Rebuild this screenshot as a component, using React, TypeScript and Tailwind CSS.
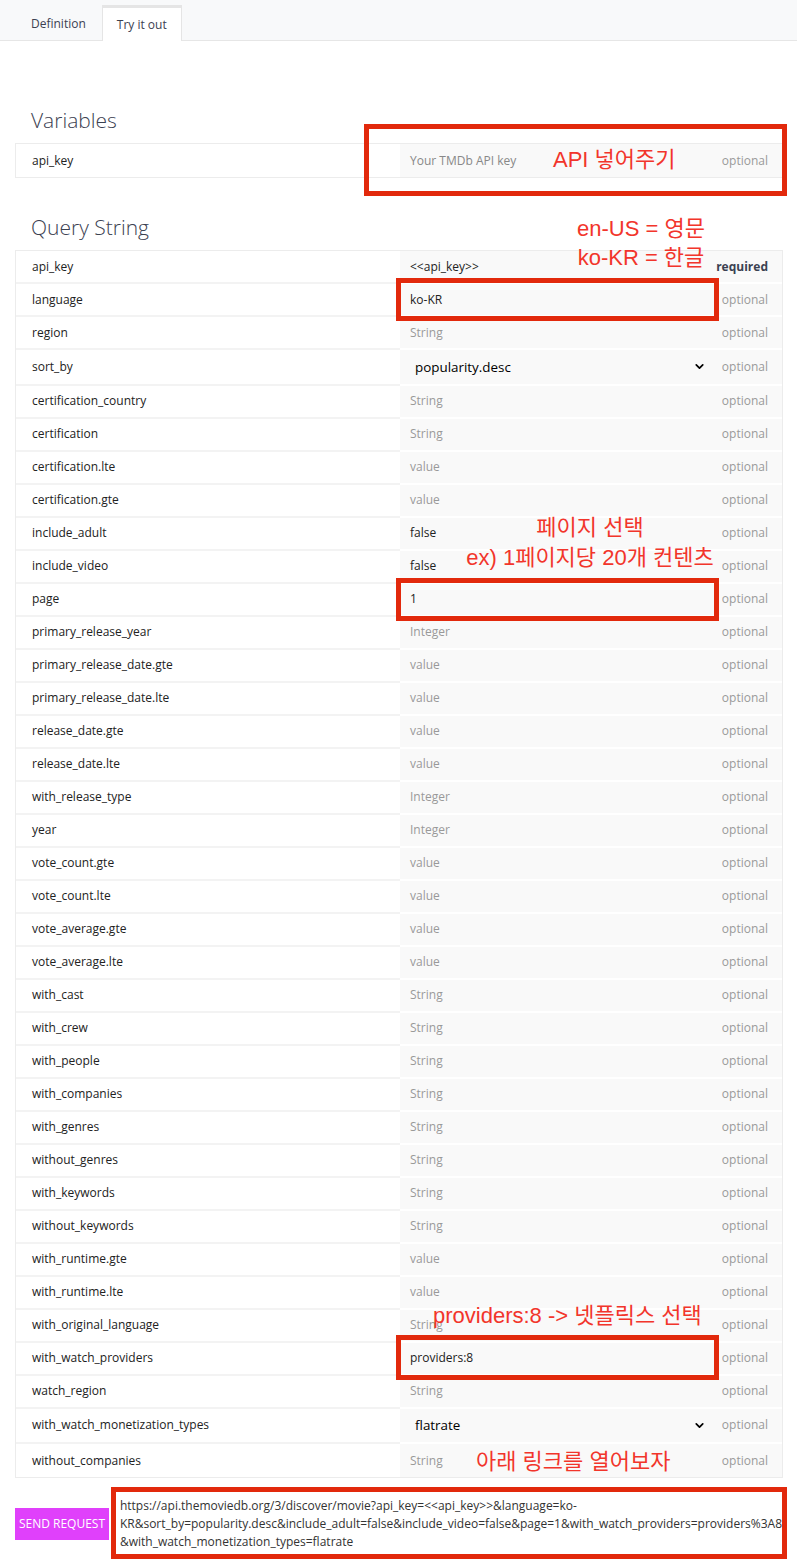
import { ChevronDown } from "lucide-react";

type Row = {
  name: string;
  value: string;
  kind?: "ph" | "val" | "select";
  required?: boolean;
};

const rows: Row[] = [
  { name: "api_key", value: "<<api_key>>", kind: "val", required: true },
  { name: "language", value: "ko-KR", kind: "val" },
  { name: "region", value: "String" },
  { name: "sort_by", value: "popularity.desc", kind: "select" },
  { name: "certification_country", value: "String" },
  { name: "certification", value: "String" },
  { name: "certification.lte", value: "value" },
  { name: "certification.gte", value: "value" },
  { name: "include_adult", value: "false", kind: "val" },
  { name: "include_video", value: "false", kind: "val" },
  { name: "page", value: "1", kind: "val" },
  { name: "primary_release_year", value: "Integer" },
  { name: "primary_release_date.gte", value: "value" },
  { name: "primary_release_date.lte", value: "value" },
  { name: "release_date.gte", value: "value" },
  { name: "release_date.lte", value: "value" },
  { name: "with_release_type", value: "Integer" },
  { name: "year", value: "Integer" },
  { name: "vote_count.gte", value: "value" },
  { name: "vote_count.lte", value: "value" },
  { name: "vote_average.gte", value: "value" },
  { name: "vote_average.lte", value: "value" },
  { name: "with_cast", value: "String" },
  { name: "with_crew", value: "String" },
  { name: "with_people", value: "String" },
  { name: "with_companies", value: "String" },
  { name: "with_genres", value: "String" },
  { name: "without_genres", value: "String" },
  { name: "with_keywords", value: "String" },
  { name: "without_keywords", value: "String" },
  { name: "with_runtime.gte", value: "value" },
  { name: "with_runtime.lte", value: "value" },
  { name: "with_original_language", value: "String" },
  { name: "with_watch_providers", value: "providers:8", kind: "val" },
  { name: "watch_region", value: "String" },
  { name: "with_watch_monetization_types", value: "flatrate", kind: "select" },
  { name: "without_companies", value: "String" },
];

export default function App() {
  return (
    <div className="relative w-[797px] min-h-[1565px] bg-white font-['Open_Sans',sans-serif] text-[12px] text-[#222]">
      {/* tabs */}
      <div className="h-[41px] bg-[#f8f9fa] border-b border-[#e6e6e6] flex items-end pl-[15px]">
        <div className="h-[36px] px-4 pt-[3px] flex items-center text-[#3b4151]">Definition</div>
        <div className="h-[36px] -mb-px px-[14px] flex items-center bg-white border-x border-t-[3px] border-[#e5e5e5] text-[#3b4151]">
          Try it out
        </div>
      </div>

      <div className="px-[15px]">
        <h2 className="mt-[64px] mb-[8px] pl-4 text-[21px] leading-[30px] font-light text-[#3b4151]">
          Variables
        </h2>
        <div className="w-[768px] border border-[#ececec]">
          <ParamRow row={{ name: "api_key", value: "Your TMDb API key", kind: "ph" }} last />
        </div>

        <h2 className="mt-[34px] mb-[8px] pl-4 text-[21px] leading-[30px] font-light text-[#3b4151]">
          Query String
        </h2>
        <div className="w-[768px] border border-[#ececec]">
          {rows.map((r, i) => (
            <ParamRow key={r.name} row={r} last={i === rows.length - 1} />
          ))}
        </div>

        <div className="mt-[19px] flex items-center">
          <button className="h-[32px] w-[96px] bg-[#e040fb] text-white text-[12px] uppercase">
            Send request
          </button>
          <div className="pl-[11px] text-[12px] leading-[18px] text-[#333]">
            <div className="whitespace-nowrap">
              https://api.themoviedb.org/3/discover/movie?api_key=&lt;&lt;api_key&gt;&gt;&amp;language=ko-
            </div>
            <div className="whitespace-nowrap">
              KR&amp;sort_by=popularity.desc&amp;include_adult=false&amp;include_video=false&amp;page=1&amp;with_watch_providers=providers%3A8
            </div>
            <div className="whitespace-nowrap">&amp;with_watch_monetization_types=flatrate</div>
          </div>
        </div>
      </div>

      {/* annotations */}
      <div className="absolute left-[364px] top-[124px] w-[423px] h-[72px] border-[5px] border-[#e2290c]" />
      <div className="absolute left-[396px] top-[278px] w-[323px] h-[43px] border-[5px] border-[#e2290c]" />
      <div className="absolute left-[396px] top-[578px] w-[323px] h-[43px] border-[5px] border-[#e2290c]" />
      <div className="absolute left-[396px] top-[1335px] w-[323px] h-[45px] border-[5px] border-[#e2290c]" />
      <div className="absolute left-[111px] top-[1487px] w-[676px] h-[72px] border-[5px] border-[#e2290c]" />

      <Note className="left-[553px] top-[147px]">API 넣어주기</Note>
      <Note className="left-[541px] top-[214px] w-[200px] text-center leading-[29px]">
        en-US = 영문
        <br />
        ko-KR = 한글
      </Note>
      <Note className="left-[440px] top-[513px] w-[300px] text-center leading-[30px]">
        페이지 선택
        <br />
        ex) 1페이지당 20개 컨텐츠
      </Note>
      <Note className="left-[433px] top-[1303px]">providers:8 -&gt; 넷플릭스 선택</Note>
      <Note className="left-[476px] top-[1449px]">아래 링크를 열어보자</Note>
    </div>
  );
}

function Note({ className, children }: { className: string; children: React.ReactNode }) {
  return (
    <div
      className={`absolute whitespace-nowrap text-[22px] leading-[26px] text-[#f2352b] font-['Liberation_Sans','Noto_Sans_CJK_KR',sans-serif] ${className}`}
    >
      {children}
    </div>
  );
}

function ParamRow({ row, last }: { row: Row; last?: boolean }) {
  const h = row.kind === "select" ? "h-[35.5px]" : "h-[33px]";
  return (
    <div className={`flex ${h}`}>
      <div
        className={`w-[384px] pl-4 flex items-center ${last ? "" : "border-b-2 border-[#f3f3f3]"}`}
      >
        {row.name}
      </div>
      <div
        className={`flex-1 bg-[#f9f9f9] flex items-center justify-between pr-[14px] ${
          last ? "" : "border-b-2 border-white"
        }`}
      >
        {row.kind === "select" ? (
          <div className="w-[310px] pl-[15px] flex items-center justify-between text-[13.4px] text-black">
            <span>{row.value}</span>
            <ChevronDown size={13} strokeWidth={3.2} className="mr-[4px]" />
          </div>
        ) : (
          <span
            className={`pl-[10px] ${
              row.kind === "val" ? "text-[#222]" : row.kind === "ph" ? "text-[#888]" : "text-[#999]"
            }`}
          >
            {row.value}
          </span>
        )}
        {row.required ? (
          <span className="font-bold text-[#3b4151]">required</span>
        ) : (
          <span className="text-[#9a9a9a]">optional</span>
        )}
      </div>
    </div>
  );
}
